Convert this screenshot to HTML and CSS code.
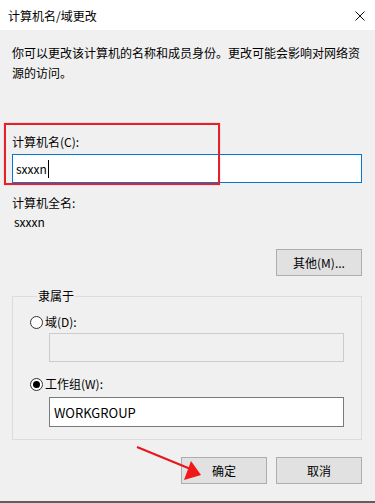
FILE: index.html
```html
<!DOCTYPE html>
<html lang="zh-CN">
<head>
<meta charset="utf-8">
<title>计算机名/域更改</title>
<link rel="stylesheet" href="styles.css">
</head>
<body>
<div class="window">
  <div class="titlebar">
    <span class="title">计算机名/域更改</span>
    <svg class="close" width="10" height="10" viewBox="0 0 10 10"><path d="M0.5 0.5 L9.5 9.5 M9.5 0.5 L0.5 9.5" stroke="#111" stroke-width="1" fill="none"/></svg>
  </div>
  <div class="content">
    <p class="desc">你可以更改该计算机的名称和成员身份。更改可能会影响对网络资源的访问。</p>
    <div class="label first">计算机名(C):</div>
    <div class="field active"><span>sxxxn</span><span class="caret"></span></div>
    <div class="label full">计算机全名:</div>
    <div class="value">sxxxn</div>
    <div class="row right"><button class="btn">其他(M)...</button></div>
    <fieldset class="group">
      <legend>隶属于</legend>
      <div class="radio r1"><span class="dot"></span><span>域(D):</span></div>
      <div class="field disabled sub"></div>
      <div class="radio r2"><span class="dot on"></span><span>工作组(W):</span></div>
      <div class="field sub wg"><span>WORKGROUP</span></div>
    </fieldset>
    <div class="row right actions"><button class="btn">确定</button><button class="btn">取消</button></div>
  </div>
  <div class="highlight"></div>
  <svg class="arrow" width="375" height="503" viewBox="0 0 375 503">
    <line x1="137" y1="447" x2="193" y2="470" stroke="#e8161c" stroke-width="2"/>
    <polygon points="201,475 191,461 184,480" fill="#f01818"/>
  </svg>
</div>
</body>
</html>
```
FILE: styles.css
```css
html, body {
  margin: 0;
  padding: 0;
}
body {
  font-family: "Noto Sans CJK SC", "Noto Sans", sans-serif;
  font-size: 12px;
  color: #000;
  background: #f0f0f0;
}
.window {
  position: relative;
  width: 375px;
  height: 503px;
  box-sizing: border-box;
  background: #f0f0f0;
  border-bottom: 2px solid #5f5f5f;
  overflow: hidden;
}
.titlebar {
  height: 30px;
  background: #fff;
  display: flex;
  align-items: center;
  justify-content: space-between;
  padding: 1px 10px 0 8px;
  box-sizing: border-box;
}
.title {
  font-size: 12px;
  line-height: 18px;
}
.content {
  padding: 0 13px 0 12px;
}
.desc {
  margin: 13px 0 0;
  width: 350px;
  line-height: 20px;
}
.label, .value, .radio, legend {
  line-height: 18px;
}
.label.first { margin-top: 50px; }
.field {
  box-sizing: border-box;
  height: 29px;
  background: #fff;
  border: 1px solid #7a7a7a;
  display: flex;
  align-items: center;
  padding-left: 3px;
}
.field.active {
  margin-top: 3px;
  width: 350px;
  border-color: #0078d7;
}
.caret {
  display: inline-block;
  width: 1px;
  height: 18px;
  background: #000;
  margin-left: 1px;
}
.label.full { margin-top: 11px; }
.value { margin-top: 1px; padding-left: 2px; }
.row { display: flex; gap: 9px; }
.right { justify-content: flex-end; width: 350px; }
.row.right { margin-top: 18px; }
.btn {
  width: 86px;
  height: 27px;
  box-sizing: border-box;
  background: #e1e1e1;
  border: 1px solid #adadad;
  font-family: inherit;
  font-size: 12px;
  color: #000;
  padding: 0;
}
.group {
  margin: 11px 0 0;
  width: 350px;
  box-sizing: border-box;
  border: 1px solid #dcdcdc;
  padding: 0 0 12px 17px;
  min-inline-size: 0;
}
.group legend {
  margin-left: 7px;
  padding: 0 1px;
}
.radio {
  display: flex;
  align-items: center;
  gap: 2px;
}
.radio.r1 { margin-top: 8px; }
.radio.r2 { margin-top: 13px; }
.dot {
  width: 13px;
  height: 13px;
  box-sizing: border-box;
  border: 1px solid #333;
  border-radius: 50%;
  background: #fff;
  display: flex;
  align-items: center;
  justify-content: center;
}
.dot.on::after {
  content: "";
  width: 7px;
  height: 7px;
  border-radius: 50%;
  background: #000;
}
.field.sub {
  margin-left: 19px;
  width: 295px;
}
.field.disabled {
  margin-top: 2px;
  background: #f0f0f0;
  border-color: #cccccc;
}
.field.wg {
  margin-top: 4px;
  height: 30px;
  padding-left: 4px;
  font-size: 13px;
}
.actions.row.right { margin-top: 17px; }
.highlight {
  position: absolute;
  left: 4px;
  top: 123px;
  width: 216px;
  height: 62px;
  box-sizing: border-box;
  border: 2px solid #e3212b;
  box-shadow: 0 0 1px rgba(255, 60, 60, 0.6);
}
.arrow {
  position: absolute;
  left: 0;
  top: 0;
}
```
